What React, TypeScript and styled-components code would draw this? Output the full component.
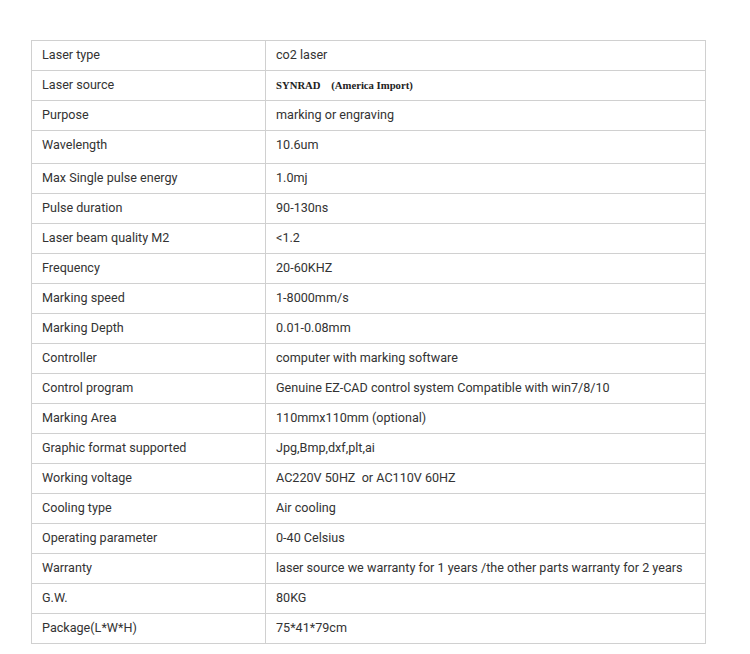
import React from "react";
import styled, { createGlobalStyle } from "styled-components";

const Global = createGlobalStyle`
  html, body { margin: 0; padding: 0; background: #fff; }
  body { font-family: Roboto, "Liberation Sans", Arial, sans-serif; }
`;

const Page = styled.div`
  width: 750px;
  height: 654px;
  padding: 40px 0 0 31px;
  box-sizing: border-box;
`;

const Table = styled.table`
  border-collapse: collapse;
  width: 675px;
  table-layout: fixed;
`;

const Row = styled.tr<{ $tall?: boolean }>`
  height: ${(p) => (p.$tall ? 33 : 30)}px;
`;

const Cell = styled.td<{ $tall?: boolean }>`
  border: 1px solid #d0d0d0;
  padding: ${(p) => (p.$tall ? "0 10px 5px" : "0 10px 2px")};
  font-size: 12.6px;
  color: #333;
  vertical-align: middle;
  white-space: pre;
`;

const LabelCell = styled(Cell)`
  width: 213px;
`;

const Serif = styled.span`
  font-family: "Liberation Serif", "Times New Roman", serif;
  font-weight: bold;
  font-size: 10.7px;
  color: #222;
  white-space: pre;
`;

const rows: [string, React.ReactNode, boolean?][] = [
  ["Laser type", "co2 laser"],
  ["Laser source", <Serif key="s">{"SYNRAD    (America Import)"}</Serif>],
  ["Purpose", "marking or engraving"],
  ["Wavelength", "10.6um", true],
  ["Max Single pulse energy", "1.0mj"],
  ["Pulse duration", "90-130ns"],
  ["Laser beam quality M2", "<1.2"],
  ["Frequency", "20-60KHZ"],
  ["Marking speed", "1-8000mm/s"],
  ["Marking Depth", "0.01-0.08mm"],
  ["Controller", "computer with marking software"],
  ["Control program", "Genuine EZ-CAD control system Compatible with win7/8/10"],
  ["Marking Area", "110mmx110mm (optional)"],
  ["Graphic format supported", "Jpg,Bmp,dxf,plt,ai"],
  ["Working voltage", "AC220V 50HZ  or AC110V 60HZ"],
  ["Cooling type", "Air cooling"],
  ["Operating parameter", "0-40 Celsius"],
  ["Warranty", "laser source we warranty for 1 years /the other parts warranty for 2 years"],
  ["G.W.", "80KG"],
  ["Package(L*W*H)", "75*41*79cm"],
];

export default function App() {
  return (
    <>
      <Global />
      <Page>
        <Table>
          <tbody>
            {rows.map(([label, value, tall]) => (
              <Row key={label} $tall={tall}>
                <LabelCell $tall={tall}>{label}</LabelCell>
                <Cell $tall={tall}>{value}</Cell>
              </Row>
            ))}
          </tbody>
        </Table>
      </Page>
    </>
  );
}
